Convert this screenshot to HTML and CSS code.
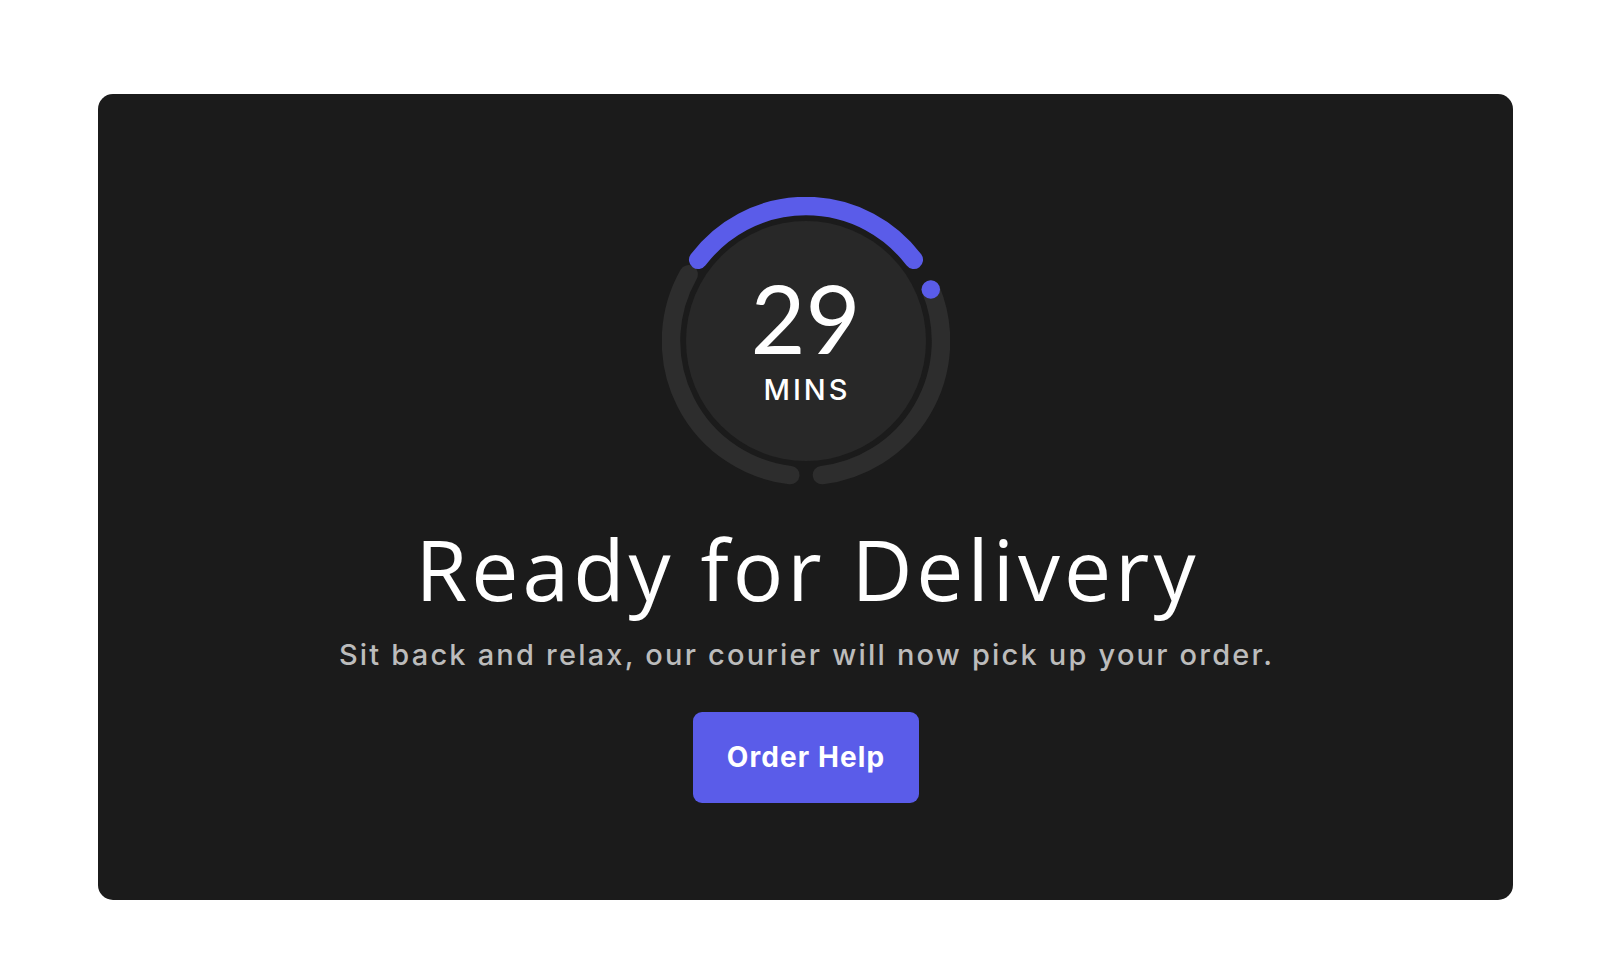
FILE: index.html
```html
<!DOCTYPE html>
<html lang="en">
  <head>
    <meta charset="UTF-8" />
    <meta name="viewport" content="width=device-width, initial-scale=1.0" />
    <title>Ready for Delivery</title>
    <link rel="stylesheet" href="styles.css">
  </head>
  <body>
    <main>
      <section class="delivery-card">
        <div class="timer">
          <svg class="timer-ring" viewBox="0 0 288 288" width="288" height="288">
            <path class="track" d="M 128.25 278.08 A 135 135 0 0 1 26.62 77.32" />
            <path class="track" d="M 268.81 92.55 A 135 135 0 0 1 159.98 278.06" />
            <path class="progress" d="M 36.19 62.76 A 135 135 0 0 1 251.81 62.76" />
            <circle class="marker" cx="268.81" cy="92.55" r="9.25" />
            <circle class="face" cx="144" cy="144" r="120" />
          </svg>
          <div class="timer-label">
            <span class="timer-value">29</span>
            <span class="timer-unit">MINS</span>
          </div>
        </div>
        <h1>Ready for Delivery</h1>
        <p class="subtitle">Sit back and relax, our courier will now pick up your order.</p>
        <button class="btn-help" type="button">Order Help</button>
      </section>
    </main>
  </body>
</html>
```
FILE: styles.css
```css
:root {
  --card-bg: #1b1b1b;
  --face-bg: #282828;
  --track-color: #2d2d2d;
  --accent: #5a5ce9;
  --muted: #bcbcbc;
}

html {
  box-sizing: border-box;
  font-size: 16px;
}

*,
*::before,
*::after {
  box-sizing: border-box;
}

body {
  margin: 0;
  background-color: #fff;
  color: #fff;
  font-family: "Inter", "Liberation Sans", sans-serif;
}

.delivery-card {
  display: flex;
  flex-direction: column;
  align-items: center;
  width: 1415px;
  margin: 94px 102px 77px 98px;
  padding: 103px 0 97px;
  background-color: var(--card-bg);
  border-radius: 15px;
}

.timer {
  display: grid;
  width: 288px;
  height: 288px;
}

.timer-ring,
.timer-label {
  grid-area: 1 / 1;
}

.timer-ring {
  display: block;
}

.timer-ring path {
  fill: none;
  stroke-width: 18.5;
  stroke-linecap: round;
}

.timer-ring .track {
  stroke: var(--track-color);
}

.timer-ring .progress {
  stroke: var(--accent);
}

.timer-ring .marker {
  fill: var(--accent);
}

.timer-ring .face {
  fill: var(--face-bg);
}

.timer-label {
  display: flex;
  flex-direction: column;
  align-items: center;
  justify-content: center;
  padding-bottom: 3px;
}

.timer-value {
  font-family: "Lato", sans-serif;
  font-size: 95px;
  line-height: 0.9;
}

.timer-unit {
  margin-top: 15px;
  padding-left: 3px;
  font-size: 29px;
  font-weight: 500;
  letter-spacing: 3px;
  line-height: 1;
}

h1 {
  margin: 42px 0 0;
  padding-left: 4px;
  font-family: "Open Sans", sans-serif;
  font-size: 84px;
  font-weight: 400;
  letter-spacing: 4px;
  line-height: 1;
}

.subtitle {
  margin: 27px 0 0;
  padding-left: 2px;
  color: var(--muted);
  font-size: 29px;
  font-weight: 500;
  letter-spacing: 2.2px;
  line-height: 1.2;
}

.btn-help {
  display: flex;
  align-items: center;
  justify-content: center;
  width: 226px;
  height: 91px;
  margin-top: 39px;
  padding: 0 0 0 1px;
  border: none;
  border-radius: 9px;
  background-color: var(--accent);
  color: #fff;
  font-family: "Inter", sans-serif;
  font-size: 28px;
  font-weight: 700;
  letter-spacing: 1.1px;
  cursor: pointer;
}
```
